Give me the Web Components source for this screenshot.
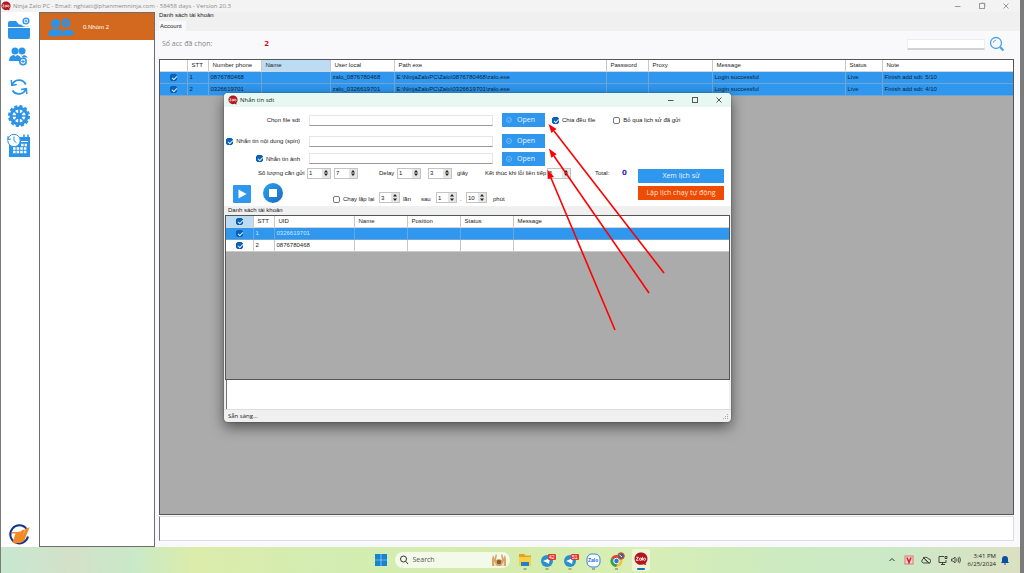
<!DOCTYPE html>
<html lang="vi">
<head>
<meta charset="utf-8">
<title>Ninja Zalo PC</title>
<style>
html,body{margin:0;height:100%}
body{font:6px/8px "Liberation Sans",Arial,sans-serif;color:#222;background:#7b7b7b;overflow:hidden}
</style>
</head>
<body>
<x-desktop></x-desktop>
<script>
const BASE = `
*{box-sizing:border-box}
:host{display:block}
button,input,textarea{font:inherit;color:inherit;margin:0;border-radius:0}
button{padding:0;border:0;background:none}
svg{display:block}
.ui{font-family:"Open Sans","Noto Sans",sans-serif}
input[type=checkbox]{appearance:none;flex:none;width:7px;height:7px;border:1px solid #777;border-radius:2px;background:#fff;position:relative}
input[type=checkbox]:checked{background:#0a63bd;border-color:#0a5cb0}
input[type=checkbox]:checked::after{content:"";display:block;width:4px;height:2px;margin:1px;border:solid #dcebfa;border-width:0 0 1px 1px;transform:rotate(-45deg)}
`;
function define(name, css, html, init) {
  const t = document.createElement('template');
  t.innerHTML = `<style>${BASE}${css}</style>${html}`;
  customElements.define(name, class extends HTMLElement {
    constructor() {
      super();
      this.attachShadow({mode: 'open'}).append(t.content.cloneNode(true));
    }
    connectedCallback() { if (init) init(this, this.shadowRoot); }
  });
}

define('x-zalo-badge', `:host{width:10px;height:10px;flex:none}svg{width:100%;height:100%}`,
`<svg viewBox="0 0 20 20" aria-hidden="true"><path d="M10 .8C4.600.8.8 4.500.8 9.600c0 5 3.900 8.700 9 8.700 1.300 0 2.600-.2 3.700-.7 1.200.9 2.700 1.200 4.100.9-.8-.6-1.100-1.500-1-2.400 1.700-1.600 2.600-4 2.600-6.500C19.200 4.500 15.400.8 10 .8z" fill="#b3171d"/><path d="M3 7.500h3.200L3.200 12h3.300M7.600 10.300a1.500 1.700 0 1 0 3 0 1.500 1.700 0 1 0-3 0M10.700 8.500V12M12.200 7v5M13.500 10.300a1.500 1.700 0 1 0 3 0 1.500 1.700 0 1 0-3 0" fill="none" stroke="#fff" stroke-width="1.200"/></svg>`);

define('x-window-buttons', `
:host{display:flex;gap:14px;align-items:center;color:var(--ink,#555)}
button{width:10px;height:10px;display:grid;place-items:center}
svg{width:8px;height:8px;fill:none;stroke:currentColor}`,
`<button aria-label="Minimize"><svg viewBox="0 0 8 8"><path d="M1 4.500h5.500"/></svg></button>
<button aria-label="Maximize"><svg viewBox="0 0 8 8"><rect class="one" x="1.500" y="1.500" width="5" height="5"/><path class="two" d="M3 2V1.200h3.800V5H6"/></svg></button>
<button aria-label="Close"><svg viewBox="0 0 8 8"><path d="M1.500 1.500l5 5M6.500 1.500l-5 5"/></svg></button>`,
(h, r) => { if (!h.hasAttribute('restore')) r.querySelector('.two').remove(); });

define('x-sidebar', `
:host{width:38px;flex:none;background:#fff;display:flex;flex-direction:column;align-items:center;padding:5px 2px 0 0}
nav{display:flex;flex-direction:column;gap:5px}
button{width:24px;height:24px}
svg{width:24px;height:24px}
.logo{margin-top:auto;width:24px;height:24px}`,
`<nav>
<button aria-label="Add folder"><svg viewBox="0 0 24 24" fill="#2b93e8"><path d="M1 9V6q0-2 2-2h6l3 3.500h2q2 2.300 5 2.300h3V10H1zM1 11h22v9q0 2-2 2H3q-2 0-2-2z"/><circle cx="19" cy="4" r="2.900" fill="#fff" stroke="#2b93e8" stroke-width="1.400"/><path d="M17.500 4h3M19 2.500v3" stroke="#2b93e8"/></svg></button>
<button aria-label="Add account"><svg viewBox="0 0 24 24" fill="#2b93e8"><circle cx="8" cy="5" r="3.500"/><circle cx="15" cy="5" r="3.500"/><path d="M2 15q0-5.500 5-6l1.500 1.500L10 9q3 .5 4 3l-1 3zM14 9l1.500 1.200L17 9q3 .6 3.500 2.600h-5z"/><circle cx="16" cy="15.500" r="3.200" fill="#fff" stroke="#2b93e8" stroke-width="1.500"/><path d="M14.300 15.500h3.400M16 13.800v3.400" stroke="#2b93e8"/></svg></button>
<button aria-label="Refresh"><svg viewBox="0 0 24 24" fill="none" stroke="#2b93e8" stroke-width="1.800"><path d="M5 10A7.500 7.500 0 0 1 18.800 9.500M19 13.500A7.500 7.500 0 0 1 5.500 15.500"/><path d="M4.300 5l.5 5.300 5-.8M19.800 19L19.300 13.700l-5.200.8" stroke-width="1.500"/></svg></button>
<button aria-label="Settings"><svg viewBox="0 0 24 24" fill="none" stroke="#2b93e8"><circle cx="12" cy="12" r="10" stroke-width="2" stroke-dasharray="3.200 2.036"/><circle cx="12" cy="12" r="8" stroke-width="3"/><path d="M12 4v16M4 12h16M6.500 6.500l11 11M17.500 6.500l-11 11" stroke-width="1.700"/><circle cx="12" cy="12" r="2.800" fill="#2b93e8"/></svg></button>
<button aria-label="Schedule"><svg viewBox="0 0 24 24"><path d="M2 4h21v20H2z" fill="#2b93e8"/><path d="M17 1.500v4M21 1.500v4" stroke="#2b93e8" stroke-width="1.500"/><circle cx="7" cy="7.500" r="6.200" fill="#fff" stroke="#2b93e8"/><path d="M7 3.500v4.300l2.500 2" fill="none" stroke="#2b93e8"/><path d="M1 3l-.2 3.500L4 6" fill="none" stroke="#2b93e8"/><path d="M14 8.500h7" stroke="#fff"/><path d="M14 12h6M6 15.500h14M6 19h14" stroke="#fff" stroke-width="2.400" stroke-dasharray="2.600 1"/></svg></button>
</nav>
<svg class="logo" viewBox="0 0 24 24" role="img" aria-label="Ninja"><path d="M19.500 6A9 9 0 1 0 21 13.500" fill="none" stroke="#17348c" stroke-width="2"/><path d="M5 9h5.500q3-1 3.500 0L10.500 20q-2.500 1-5-.5L8.500 10.500H5zM14 8q2-2 4-1.500L13.500 20h-4zM18.500 6q2-2 4-1.500L17 18q-2 1.500-3.500 1.500z" fill="#f28a22"/></svg>`);

define('x-group-list', `
:host{width:116px;flex:none;background:#fff;border:1px solid #6d6d6d}
button{width:100%;height:27px;display:flex;align-items:center;background:#d2691e;color:#fff;padding-left:7px;gap:8px;text-align:left}
svg{width:28px;height:24px}`,
`<button><svg viewBox="0 0 28 24" fill="#2b93e8"><circle cx="8.500" cy="8.500" r="4.500"/><path d="M1 20q0-6 6-6h4q3 0 4 2-2 2-2 5-6 1.500-12-1zM14 21q0-6 5-6h3q5 0 5 3 0 2-4 2.500z"/><circle cx="19" cy="8" r="3" fill="none" stroke="#2b93e8" stroke-width="3"/></svg><span>0.Nhóm 2</span></button>`);

/* Data grid: column widths, headings and rows come from the element's JSON children. */
define('x-grid', `
:host{background:#ababab;border:1px solid #555;overflow:hidden}
table{border-collapse:collapse;table-layout:fixed;width:100%}
th,td{height:12px;padding:0 2px;text-align:left;font-weight:400;white-space:nowrap;overflow:hidden;border-right:1px solid #c9c9c9;line-height:8px}
tr>:last-child{border-right:0}
th{height:11px;background:#fff;padding-left:4px;border-bottom:1px solid #d5d5d5}
th.hot{background:#bcdcf4}
td{background:#fff;border-bottom:1px solid #c9c9c9}
tr.on td{background:#2f97ee;color:var(--sel,#0e2336);border-color:#6fa6d6}
td:first-child,th:first-child{text-align:center;padding:0}
input{vertical-align:middle}`,
`<table><colgroup></colgroup><thead></thead><tbody></tbody></table>`,
(h, r) => {
  const d = JSON.parse(h.querySelector('script').textContent);
  const box = '<input type="checkbox" checked aria-label="Select">';
  r.querySelector('colgroup').innerHTML = d.cols.map(c => `<col${c[1] ? ` style="width:${c[1]}px"` : ''}>`).join('');
  r.querySelector('thead').innerHTML = '<tr>' + d.cols.map((c, i) => `<th class="${i === d.hot ? 'hot' : ''}">${c[0] === '#' ? box : c[0]}</th>`).join('') + '</tr>';
  r.querySelector('tbody').innerHTML = d.rows.map((row, i) => `<tr class="${d.on.includes(i) ? 'on' : ''}"><td>${box}</td>${row.map(c => `<td>${c}</td>`).join('')}</tr>`).join('');
});

define('x-accounts', `
:host{flex:1;min-width:0;background:#f9f9fb;display:flex;flex-direction:column}
header{background:#f0f0f1;height:19px;padding-left:4px;display:flex;flex-direction:column;justify-content:space-between}
header div:first-child{margin-top:-1px}
.tab{align-self:flex-start;background:#f9f9fb;padding:1px 4px 1px 1px;height:10px}
.bar{height:28px;display:flex;align-items:center;padding:0 15px 2px 7px;font-size:7px;color:#858585}
.bar b{color:#e00e1e;font:bold 7px/8px "DejaVu Sans",sans-serif;margin-left:52px}
form{margin-left:auto;display:flex;align-items:center;gap:4px}
form input{width:78px;height:11px;border:1px solid #eee;border-bottom:2px solid #d2d2d2;background:#fff}
svg{width:16px;height:16px}
x-grid{flex:1;margin:0 6px 0 4px}
textarea{display:block;resize:none;margin:1px 6px 6px 4px;height:25px;border:1px solid #ddd;border-left-color:#777;background:#fff;padding:2px}`,
`<header><div>Danh sách tài khoản</div><div class="tab">Account</div></header>
<div class="bar"><span class="ui">Số acc đã chọn:</span><b>2</b>
<form><input type="text" aria-label="Search account"><button type="button" aria-label="Search"><svg viewBox="0 0 16 16" fill="none" stroke="#4ba3e3"><circle cx="7" cy="7" r="5.500" stroke-width="1.300"/><path d="M4.200 7A3 3 0 0 1 7 4.200" stroke-width=".8"/><path d="M11 11l3.500 3.500" stroke-width="2.300"/></svg></button></form></div>
<x-grid><script type="application/json">{"hot":3,"on":[0,1],"cols":[["",27],["STT",21],["Number phone",53],["Name",69],["User local",64],["Path exe",212],["Password",42],["Proxy",64],["Message",133],["Status",37],["Note",0]],
"rows":[["1","0876780468","","zalo_0876780468","E:\\\\NinjaZaloPC\\\\Zalo\\\\0876780468\\\\zalo.exe","","","Login successful","Live","Finish add sdt: 5/10"],["2","0326619701","","zalo_0326619701","E:\\\\NinjaZaloPC\\\\Zalo\\\\0326619701\\\\zalo.exe","","","Login successful","Live","Finish add sdt: 4/10"]]}<\/script></x-grid>
<textarea readonly aria-label="Log"></textarea>`);

define('x-spin', `
:host{display:flex;width:24px;height:11px;border:1px solid #c4c4c4;background:#fff}
input{flex:1;min-width:0;border:0;padding:0 1px;background:none;outline:0}
span{width:8px;display:grid;background:#e6e6e6}
svg{width:8px;height:4px}`,
`<input type="text" inputmode="numeric"><span><button aria-label="Increase"><svg viewBox="0 0 8 4"><path d="M4 1L6 3.500H2z" fill="#222"/></svg></button><button aria-label="Decrease"><svg viewBox="0 0 8 4"><path d="M4 3L6 .5H2z" fill="#222"/></svg></button></span>`,
(h, r) => {
  const i = r.querySelector('input');
  i.value = h.getAttribute('value');
  i.setAttribute('aria-label', h.getAttribute('label'));
});

define('x-check', `label{display:flex;align-items:center;gap:3px;white-space:nowrap}`,
`<label><input type="checkbox"><slot></slot></label>`,
(h, r) => { r.querySelector('input').checked = h.hasAttribute('checked'); });

define('x-open-button', `
button{width:100%;height:14px;background:#2f97ee;color:#e6f3ff;display:flex;align-items:center;padding-left:4px;gap:5px;font-size:7px}
svg{width:6px;height:6px}`,
`<button class="ui"><svg viewBox="0 0 6 6" fill="none" stroke="#9fd0fa" stroke-width=".6"><circle cx="3" cy="3" r="2.500"/><path d="M2 3l.8.8L4.200 2.300"/></svg><slot></slot></button>`);

define('x-send-form', `
:host{background:#fff;padding-top:2px;height:99px}
.top{display:grid;grid-template-columns:76px 184px 43px 1fr;column-gap:9px;grid-template-rows:22px 20px 15px;align-items:center}
.lab{justify-self:end}
.top input[type=text]{width:100%;height:11px;border:1px solid #e6e6e6;border-bottom-color:#999;background:#fff}
.opts{display:flex;gap:18px;margin-left:-2px}
.low{display:flex;padding-right:7px}
.left{flex:1}
.r4,.r5{display:grid;align-items:center;white-space:nowrap}
.r4{height:14px;padding-left:34px;grid-template-columns:49px 27px 45px 18px 31px 29px 28px 62px 48px 27px 1fr}
.r4 b{font:bold 7px/8px "DejaVu Sans",sans-serif;color:#3126c9}
.r5{height:23px;align-items:end;padding-left:9px;grid-template-columns:30px 70px 46px 24px 18px 15px 24px 6px 27px 1fr}
.r5 x-spin{width:21px}
.play{width:18px;height:18px;background:#2f97ee;border-radius:1px}
.stop{width:20px;height:20px;border-radius:50%;background:linear-gradient(135deg,#29a5ee,#1b68c4)}
.play svg,.stop svg{width:100%;height:100%}
.acts{width:86px;display:grid;gap:3px;align-content:start;padding-top:3px}
.acts button{height:14px;color:#eaf5ff;background:#2f97ee;font-size:7px;white-space:nowrap}
.acts .warn{background:#ee4b04;color:#ffe3d4}`,
`<div class="top">
<label class="lab" for="f">Chọn file sdt</label><input type="text" id="f"><x-open-button>Open</x-open-button>
<div class="opts"><x-check checked>Chia đều file</x-check><x-check>Bỏ qua lịch sử đã gửi</x-check></div>
<x-check class="lab" checked>Nhắn tin nội dung (spin)</x-check><input type="text" aria-label="Nhắn tin nội dung"><x-open-button>Open</x-open-button><span></span>
<x-check class="lab" checked>Nhắn tin ảnh</x-check><input type="text" aria-label="Nhắn tin ảnh"><x-open-button>Open</x-open-button><span></span>
</div>
<div class="low"><div class="left">
<div class="r4"><span>Số lượng cần gửi</span><x-spin value="1" label="Từ"></x-spin><x-spin value="7" label="Đến"></x-spin><span>Delay</span><x-spin value="1" label="Delay từ"></x-spin><x-spin value="3" label="Delay đến"></x-spin><span>giây</span><span>Kết thúc khi lỗi liên tiếp</span><x-spin value="5" label="Số lỗi"></x-spin><span>Total:</span><b>0</b></div>
<div class="r5"><button class="play" aria-label="Start"><svg viewBox="0 0 18 18"><path d="M5.500 4.500v9l8-4.500z" fill="#fff"/></svg></button><button class="stop" aria-label="Stop"><svg viewBox="0 0 20 20"><rect x="6" y="6" width="8" height="8" fill="#fff"/></svg></button><x-check>Chạy lặp lại</x-check><x-spin value="3" label="Số lần"></x-spin><span>lần</span><span>sau</span><x-spin value="1" label="Sau từ"></x-spin><span>.</span><x-spin value="10" label="Sau đến"></x-spin><span>phút</span></div>
</div><div class="acts ui"><button>Xem lịch sử</button><button class="warn">Lập lịch chạy tự động</button></div></div>`);

define('x-dialog', `
:host{background:#f0f0f0;display:flex;flex-direction:column;border-radius:4px;overflow:hidden;box-shadow:0 5px 14px #0008,0 0 2px #0006}
header{height:14px;flex:none;background:#e6f8f1;display:flex;align-items:center;gap:2px;padding:0 7px 0 4px}
x-window-buttons{margin-left:auto}
.cap{padding-left:4px;height:9px}
x-grid{flex:1;margin:0 1px 0 1px;--sel:#c9e8ff}
textarea{display:block;resize:none;height:29px;margin:0 2px;border:0;border-left:1px solid #777;background:#fff;padding:2px}
footer{height:13px;flex:none;display:flex;justify-content:space-between;align-items:center;padding:0 2px 0 4px;border-top:1px solid #ddd}
footer svg{width:7px;height:7px}`,
`<header><x-zalo-badge></x-zalo-badge><span class="ui">Nhắn tin sdt</span><x-window-buttons></x-window-buttons></header>
<x-send-form></x-send-form>
<div class="cap">Danh sách tài khoản</div>
<x-grid><script type="application/json">{"hot":0,"on":[0],"cols":[["#",27],["STT",21],["UID",80],["Name",53],["Position",53],["Status",53],["Message",0]],
"rows":[["1","0326619701","","","",""],["2","0876780468","","","",""]]}<\/script></x-grid>
<textarea readonly aria-label="Log"></textarea>
<footer><span class="ui">Sẵn sàng...</span><svg viewBox="0 0 7 7" fill="#aaa"><path d="M5 1h1v1H5zM3 3h1v1H3zM5 3h1v1H5zM1 5h1v1H1zM3 5h1v1H3zM5 5h1v1H5z"/></svg></footer>`);

define('x-taskbar', `
:host{height:26px;flex:none;display:grid;grid-template-columns:1fr auto 1fr;align-items:center;
background:linear-gradient(90deg,#c8e8d0,#d3e1c8 7%,#c9e9c8 13%,#dcecaa 19%,#d3edb2 32%,#d6ecac 50%,#d8eeb4 62%,#cdebc0 76%,#cbe9c6 87%,#dce0c2)}
.mid{grid-column:2;display:flex;align-items:center;gap:7px;padding-left:2px}
.mid svg{width:16px;height:20px}
.mid .win{width:14px;height:14px}
label{display:flex;align-items:center;width:115px;height:16px;border-radius:8px;background:#f3faea;padding:0 3px 0 4px;gap:4px}
label input{flex:1;min-width:0;border:0;background:none;padding:0;font-size:7px;outline:0}
label input::placeholder{color:#555}
.mid .lens{width:10px;height:10px}
.mid .art{width:16px;height:14px}
.act{background:#eef5d6;border-radius:2px;width:18px;height:22px;display:flex;flex-direction:column;align-items:center;justify-content:space-between;padding:3px 0 1px}
.act::after{content:"";width:8px;height:2px;border-radius:1px;background:#1272c0}
.act x-zalo-badge{width:14px;height:14px}
.tray{justify-self:end;display:flex;align-items:center;gap:7px;padding-right:10px}
.tray svg{width:10px;height:10px;flex:none}
.dev{display:flex;gap:3px}
.clock{display:flex;align-items:center;gap:4px}
time{text-align:right;white-space:nowrap}`,
`<div class="mid">
<svg class="win" viewBox="0 0 14 14" fill="#1583d8"><path d="M1 1h5.700v5.700H1zM7.300 1H13v5.700H7.300zM1 7.300h5.700V13H1zM7.300 7.300H13V13H7.300z"/></svg>
<label class="ui"><svg class="lens" viewBox="0 0 10 10" fill="none" stroke="#333"><circle cx="4.500" cy="4" r="3"/><path d="M6.700 6.300L9 9"/></svg><input type="text" placeholder="Search" aria-label="Search"><svg class="art" viewBox="0 0 16 14"><path d="M1 13V6l1-4 1 2v2l2-5 1 1-1 5 3-1 3 1-1-5 1-1 2 5V4l1-2 1 4v7z" fill="#d8a667"/><path d="M3 13V8l3 5zM13 13V8l-3 5z" fill="#f0dbad"/><circle cx="8" cy="9" r="2.200" fill="#8c5a34"/></svg></label>
<svg viewBox="0 0 16 20"><path d="M2 4h5l1.500 1.500H14V8H2z" fill="#e5a21c"/><path d="M2 7h12v9H2z" fill="#fbcf45"/><path d="M4 12h8v4H4z" fill="#1c7fd0"/><path d="M6.500 19h3" stroke="#667"/></svg>
<svg viewBox="0 0 16 20"><circle cx="7" cy="11" r="6" fill="#2b8fcb"/><path d="M3 11l7-3-1 6-2.500-1.500z" fill="#fff"/><rect x="8" y="4" width="8" height="6" rx="1" fill="#e0392e"/><text x="9" y="9" font-size="5" fill="#fff">42</text><path d="M5.500 19h3" stroke="#667"/></svg>
<svg viewBox="0 0 16 20"><circle cx="7" cy="11" r="6" fill="#2b8fcb"/><path d="M3 11l7-3-1 6-2.500-1.500z" fill="#fff"/><rect x="8" y="4" width="8" height="6" rx="1" fill="#e0392e"/><text x="9" y="9" font-size="5" fill="#fff">51</text><path d="M5.500 19h3" stroke="#667"/></svg>
<svg viewBox="0 0 16 20"><rect x="1" y="4" width="13" height="13" rx="5" fill="#fff" stroke="#2b85e8"/><text x="2" y="12" font-size="5" font-weight="700" fill="#1769d6">Zalo</text><path d="M6 19h3" stroke="#667"/></svg>
<svg viewBox="0 0 16 20"><circle cx="7.500" cy="11" r="6" fill="#f3c42d"/><path d="M7.500 11L2.300 8A6 6 0 0 1 12.700 8z" fill="#de4233"/><path d="M7.500 11L2.300 8A6 6 0 0 0 7 17l2-4z" fill="#31a04f"/><circle cx="7.500" cy="11" r="2.800" fill="#2f76e5" stroke="#fff"/><circle cx="12" cy="6" r="3.300" fill="#555a66" stroke="#d95a4b"/><path d="M10.500 5l2.500 2" stroke="#fff"/><path d="M6 19h3" stroke="#667"/></svg>
<div class="act"><x-zalo-badge></x-zalo-badge></div>
</div>
<div class="tray ui">
<svg viewBox="0 0 10 10" fill="none" stroke="#333"><path d="M2.500 6L5 3.500 7.500 6"/></svg>
<svg viewBox="0 0 10 10"><rect x="1" y="1" width="8" height="8" fill="#f6d3cf" stroke="#d97a76"/><path d="M3 2.500l2 5 2-5" fill="none" stroke="#cf1f2a" stroke-width="1.500"/></svg>
<svg viewBox="0 0 10 10" fill="none" stroke="#333" stroke-width=".9"><path d="M2.500 8A2 2 0 0 1 2 4.200 3 3 0 0 1 7.500 4 2 2 0 0 1 8 8zM2 2l6.500 6.500M4 4.500l3 3"/></svg>
<div class="dev"><svg viewBox="0 0 10 10" fill="none" stroke="#333" stroke-width=".9"><path d="M6 1.500H1v6h7V5M3 9.500h4M4.500 7.500v2M7 1.500h2v2H7z"/></svg>
<svg viewBox="0 0 10 10" fill="none" stroke="#333" stroke-width=".8"><path d="M.5 4v2h1.500l2 2V2L2 4zM5.500 3.500q1 1.500 0 3M7 2.500q1.700 2.500 0 5M8.500 1.800q2 3.200 0 6.400"/></svg></div>
<div class="clock"><time>3:41 PM<br>6/25/2024</time>
<svg viewBox="0 0 10 10" fill="#0b4fa5"><path d="M1 8l1-1.500V4a3 3 0 0 1 6 0v2.500L9 8zM4 8.500h2v1H4z"/></svg></div>
</div>`);

define('x-desktop', `
:host{position:relative;min-height:100vh;display:flex;flex-direction:column;background:#7b7b7b;padding:0 4px 0 1px}
header{height:12px;flex:none;background:#f3f3f3;color:#8b8b8b;display:flex;align-items:center;gap:2px;padding:0 9px 0 0;--ink:#999}
x-window-buttons{margin-left:auto}
main{flex:1;display:flex;background:#f4f4f5}
x-dialog{position:absolute;left:224px;top:93px;width:507px;height:329px}
.arrows{position:absolute;left:0;top:0;width:100%;height:100%;pointer-events:none}`,
`<header><x-zalo-badge></x-zalo-badge><span class="ui">Ninja Zalo PC - Email: nghiatt@phanmemninja.com - 58458 days - Version 20.3</span><x-window-buttons restore></x-window-buttons></header>
<main><x-sidebar></x-sidebar><x-group-list></x-group-list><x-accounts></x-accounts></main>
<x-taskbar></x-taskbar>
<x-dialog></x-dialog>
<svg class="arrows" aria-hidden="true"><defs><marker id="m" markerUnits="userSpaceOnUse" markerWidth="10" markerHeight="8" refX="1" refY="4" orient="auto-start-reverse" viewBox="0 0 10 8"><path d="M10 4L1 .8v6.400z" fill="#f00"/></marker></defs>
<g stroke="#f00" stroke-width="1.600" fill="none"><path d="M664 273L554 131" marker-end="url(#m)"/><path d="M649 293L554 156" marker-end="url(#m)"/><path d="M615 330L551 178" marker-end="url(#m)"/></g></svg>`);
</script>
</body>
</html>
